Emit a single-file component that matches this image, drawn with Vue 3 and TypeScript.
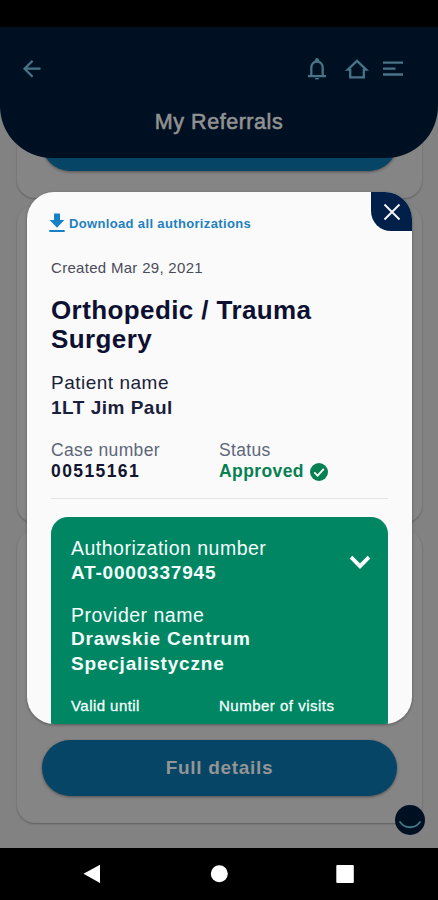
<script setup lang="ts">
interface Authorization {
  number: string
  name: string
}

const referral = {
  created: 'Created Mar 29, 2021',
  specialty: 'Orthopedic / Trauma Surgery',
  patient: '1LT Jim Paul',
  caseNumber: '00515161',
  status: 'Approved',
}

const authorization: Authorization = {
  number: 'AT-0000337945',
  name: 'Drawskie Centrum Specjalistyczne',
}
</script>

<template>
  <div class="phone">
    <div class="status-bar"></div>
    <div class="screen">
      <header class="header">
        <div class="toolbar">
          <svg class="back" width="20" height="20" viewBox="0 0 20 20">
            <path d="M18.500 9.700H3M10.600 1.700l-8 8 8 8" />
          </svg>
          <div class="actions">
            <svg width="20" height="24" viewBox="0 0 20 24">
              <path d="M1 19.200h18M4.300 19v-8.500a5.700 6 0 0 1 11.400 0V19" />
              <path class="solid" d="M8 4.500V3a2 2 0 0 1 4 0v1.500zM7.700 21h4.600a2.300 1.600 0 0 1-4.600 0z" />
            </svg>
            <svg width="24" height="24" viewBox="0 0 24 24">
              <path d="M5.200 12.700H2.700L12 3.900l9.300 8.800h-2.500M5.200 11.700v8.600h13.600v-8.600" />
            </svg>
            <svg width="22" height="24" viewBox="0 0 22 24">
              <path d="M1 5.700h20M1 11.600h12.500M1 17.500h20" />
            </svg>
          </div>
        </div>
        <h1 class="title">My Referrals</h1>
      </header>
      <main class="list">
        <section class="card first"><div class="button"></div></section>
        <section class="card middle"></section>
        <section class="card last"><div class="button">Full details</div></section>
      </main>
      <div class="chat">
        <svg width="30" height="30" viewBox="0 0 30 30"><path d="M5 17c5 7 15 7 20 0" /></svg>
      </div>
      <div class="modal">
        <div class="close">
          <svg width="18" height="18" viewBox="0 0 18 18"><path d="M1.500 1.500l15 15M16.500 1.500l-15 15" /></svg>
        </div>
        <div class="download">
          <svg width="16" height="20" viewBox="0 0 16 20">
            <path d="M5 .500h6V7h4.300L8 14.700.700 7H5zM.300 17h15.400v2H.300z" />
          </svg>
          <span>Download all authorizations</span>
        </div>
        <p class="created">{{ referral.created }}</p>
        <h2 class="specialty">{{ referral.specialty }}</h2>
        <div class="patient">
          <div class="label">Patient name</div>
          <div class="value">{{ referral.patient }}</div>
        </div>
        <div class="facts">
          <div>
            <div class="fact-label">Case number</div>
            <div class="fact-value digits">{{ referral.caseNumber }}</div>
          </div>
          <div>
            <div class="fact-label">Status</div>
            <div class="fact-value approved">
              {{ referral.status }}
              <svg width="18" height="18" viewBox="0 0 18 18">
                <circle cx="9" cy="9" r="9" />
                <path d="M4.300 9.400l3.300 3.300 6.200-6.800" />
              </svg>
            </div>
          </div>
        </div>
        <div class="authorization">
          <div class="auth-head">
            <div>
              <div class="label">Authorization number</div>
              <div class="value auth-number">{{ authorization.number }}</div>
            </div>
            <svg width="22" height="15" viewBox="0 0 22 15"><path d="M2 2.200l9 9 9-9" /></svg>
          </div>
          <div class="provider">
            <div class="label">Provider name</div>
            <div class="value provider-name">{{ authorization.name }}</div>
          </div>
          <div class="auth-columns">
            <div class="valid">Valid until</div>
            <div class="visits">Number of visits</div>
          </div>
        </div>
      </div>
    </div>
    <nav class="nav-bar">
      <svg width="18" height="20" viewBox="0 0 18 20"><path d="M17 .700v18.200L.500 9.800z" /></svg>
      <svg width="18" height="20" viewBox="0 0 18 20"><circle cx="9.300" cy="9.700" r="8.500" /></svg>
      <svg width="18" height="20" viewBox="0 0 18 20"><rect x=".300" y="1" width="17.500" height="18" rx="1" /></svg>
    </nav>
  </div>
</template>

<style>
body {
  margin: 0;
  background: #000;
}
</style>

<style scoped>
.phone {
  width: 438px;
  height: 900px;
  display: flex;
  flex-direction: column;
  background: #000;
  font-family: "Liberation Sans", Arial, sans-serif;
  overflow: hidden;
}
.phone svg {
  display: block;
  flex: none;
}
.status-bar {
  height: 27px;
  flex: none;
}
.screen {
  position: relative;
  height: 821px;
  flex: none;
  overflow: hidden;
  background: #828282;
}
.header {
  position: relative;
  z-index: 1;
  height: 131px;
  box-sizing: border-box;
  padding: 30px 34px 0 22px;
  border-radius: 0 0 52px 52px;
  background: #001023;
}
.toolbar {
  display: flex;
  align-items: center;
  justify-content: space-between;
  height: 24px;
}
.toolbar svg {
  fill: none;
  stroke: #477486;
  stroke-width: 2.3;
}
.toolbar .solid {
  fill: #477486;
  stroke: none;
}
.actions {
  display: flex;
}
.actions svg:nth-child(2) {
  margin: 0 13px 0 18px;
}
.title {
  margin: 27px -12px 0 0;
  text-align: center;
  font-size: 21.5px;
  line-height: 28px;
  font-weight: 400;
  letter-spacing: 0.55px;
  color: #929292;
  -webkit-text-stroke: 0.6px #929292;
}
.list {
  display: flex;
  flex-direction: column;
  gap: 7px;
  margin-top: -61px;
  padding: 0 16px 0 17px;
}
.card {
  box-sizing: border-box;
  border-radius: 18px;
  padding: 0 25px 27px;
  display: flex;
  flex-direction: column;
  justify-content: flex-end;
  background: #858585;
  box-shadow: 0 1px 2px rgba(0, 0, 0, 0.28);
}
.first {
  height: 101px;
}
.middle {
  height: 318px;
}
.last {
  height: 293px;
}
.button {
  height: 56px;
  border-radius: 28px;
  background: #064566;
  box-shadow: 0 1px 3px rgba(0, 0, 0, 0.4);
  color: #949494;
  text-align: center;
  font-size: 19px;
  line-height: 55px;
  font-weight: 700;
  letter-spacing: 0.7px;
}
.chat {
  position: absolute;
  left: 395px;
  top: 778px;
  width: 30px;
  height: 30px;
  border-radius: 50%;
  background: #001023;
}
.chat svg {
  fill: none;
  stroke: #477486;
  stroke-width: 1.8;
  stroke-linecap: round;
}
.modal {
  position: absolute;
  z-index: 2;
  left: 27px;
  top: 165px;
  width: 385px;
  height: 532px;
  box-sizing: border-box;
  padding: 21px 24px 0;
  border-radius: 27px;
  background: #fafafa;
  box-shadow: 0 1px 3px rgba(0, 0, 0, 0.35);
  overflow: hidden;
}
.close {
  position: absolute;
  right: 0;
  top: 0;
  width: 41px;
  height: 39px;
  display: grid;
  place-items: center;
  background: #001f49;
  border-bottom-left-radius: 20px;
}
.close svg {
  fill: none;
  stroke: #f4f4f4;
  stroke-width: 2;
}
.download {
  display: flex;
  align-items: center;
  gap: 4px;
  height: 20px;
  margin-left: -2px;
  color: #1e80c0;
  font-size: 13px;
  font-weight: 700;
  letter-spacing: 0.35px;
}
.download svg {
  fill: #1681c4;
}
.created {
  margin: 25px 0 0;
  font-size: 15px;
  line-height: 20px;
  letter-spacing: 0.3px;
  color: #4b4c59;
}
.specialty {
  margin: 18px 0 0;
  width: 300px;
  font-size: 26px;
  line-height: 29px;
  font-weight: 700;
  letter-spacing: 0.4px;
  color: #0d1031;
}
.patient {
  margin-top: 17px;
  color: #1b1e3b;
}
.label {
  font-size: 19px;
  line-height: 24px;
  letter-spacing: 0.5px;
}
.value {
  font-size: 19px;
  line-height: 25px;
  font-weight: 700;
  letter-spacing: 0.5px;
}
.facts {
  display: grid;
  grid-template-columns: 168px 1fr;
  margin-top: 20px;
  padding-bottom: 16px;
  border-bottom: 1px solid #e2e3e6;
}
.fact-label {
  font-size: 17.5px;
  line-height: 21px;
  letter-spacing: 0.35px;
  color: #5d6679;
}
.fact-value {
  font-size: 17.5px;
  line-height: 21px;
  font-weight: 700;
  letter-spacing: 0.4px;
  color: #12152f;
}
.digits {
  letter-spacing: 1.4px;
}
.approved {
  display: flex;
  align-items: center;
  gap: 6px;
  color: #078052;
}
.approved svg {
  fill: #078052;
}
.approved path {
  fill: none;
  stroke: #fff;
  stroke-width: 1.8;
}
.authorization {
  height: 260px;
  box-sizing: border-box;
  margin-top: 18px;
  padding: 19px 17px 0 20px;
  border-radius: 17px;
  background: #018664;
  color: #f5fffb;
}
.auth-head {
  display: flex;
  align-items: center;
  justify-content: space-between;
}
.auth-head svg {
  fill: none;
  stroke: #fff;
  stroke-width: 3.8;
  margin-top: 3px;
}
.authorization .label {
  font-size: 19.5px;
}
.authorization .auth-number {
  letter-spacing: 0.8px;
}
.provider {
  margin-top: 18px;
}
.authorization .provider-name {
  width: 220px;
  line-height: 24.5px;
  letter-spacing: 0.8px;
}
.auth-columns {
  display: grid;
  grid-template-columns: 148px 1fr;
  margin-top: 20px;
  font-size: 15px;
  line-height: 20px;
  -webkit-text-stroke: 0.3px #f5fffb;
}
.valid {
  letter-spacing: 0.45px;
}
.visits {
  letter-spacing: 0.5px;
}
.nav-bar {
  display: flex;
  justify-content: space-between;
  align-items: center;
  height: 52px;
  box-sizing: border-box;
  padding: 0 84px 0 83px;
}
.nav-bar svg {
  fill: #fff;
}
</style>
